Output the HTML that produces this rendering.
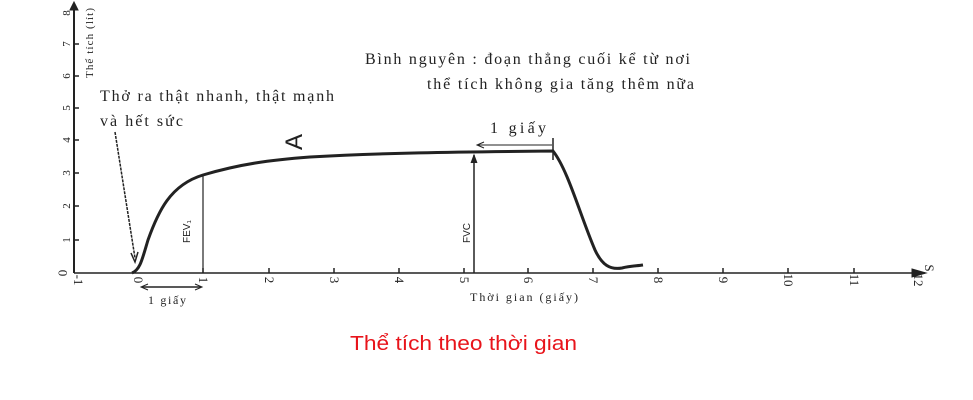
<!DOCTYPE html>
<html><head><meta charset="utf-8"><style>
html,body{margin:0;padding:0;background:#fff;width:973px;height:400px;overflow:hidden}
svg{position:absolute;left:0;top:0}
.s{font-family:"Liberation Serif",serif;fill:#222}
</style></head><body>
<svg width="973" height="400" viewBox="0 0 973 400">
<g stroke="#222" fill="none">
<line x1="74" y1="273" x2="74" y2="6" stroke-width="2"/>
<path d="M70,10 L74,2 L78,10Z" fill="#222"/>
<line x1="74" y1="273" x2="925" y2="273" stroke-width="1.5"/>
<path d="M912,269 L926,273 L912,277Z" fill="#222"/>
<g stroke-width="1.5">
<line x1="74" y1="240" x2="79" y2="240"/><line x1="74" y1="206" x2="79" y2="206"/>
<line x1="74" y1="173" x2="79" y2="173"/><line x1="74" y1="140" x2="79" y2="140"/>
<line x1="74" y1="108" x2="79" y2="108"/><line x1="74" y1="76" x2="79" y2="76"/>
<line x1="74" y1="44" x2="79" y2="44"/>
<line x1="203" y1="268" x2="203" y2="273"/><line x1="269" y1="268" x2="269" y2="273"/>
<line x1="334" y1="268" x2="334" y2="273"/><line x1="399" y1="268" x2="399" y2="273"/>
<line x1="464" y1="268" x2="464" y2="273"/><line x1="528" y1="268" x2="528" y2="273"/>
<line x1="593" y1="268" x2="593" y2="273"/><line x1="658" y1="268" x2="658" y2="273"/>
<line x1="723" y1="268" x2="723" y2="273"/><line x1="788" y1="268" x2="788" y2="273"/>
<line x1="854" y1="268" x2="854" y2="273"/>
</g>
<path d="M132,273 C140,270 142,260 148,240 C158,212 170,185 203,175 C240,164 270,160 310,157 C380,153 450,152 553,151 C568,170 580,215 595,250 C602,265 610,270 622,268 C630,266 636,266 643,265" stroke-width="3"/>
<line x1="115" y1="132" x2="135" y2="258" stroke-width="1.5" stroke-dasharray="3,1"/>
<path d="M131,253 L135,262 L138,252" stroke-width="1.5"/>
<line x1="203" y1="175" x2="203" y2="273" stroke-width="1.2"/>
<line x1="474" y1="155" x2="474" y2="273" stroke-width="1.5"/>
<path d="M471,163 L474,155 L477,163" fill="#222"/>
<line x1="142" y1="287" x2="201" y2="287" stroke-width="1.5"/>
<path d="M148,284 L141,287 L148,290 M195,284 L202,287 L195,290"/>
<line x1="478" y1="145" x2="552" y2="145" stroke-width="1"/>
<path d="M484,142 L477,145 L484,148"/>
<line x1="553" y1="138" x2="553" y2="160" stroke-width="1.5"/>
</g>
<g class="s" font-size="13">
<text transform="translate(93,78) rotate(-90)" font-size="11" textLength="70" lengthAdjust="spacing">Thể tích (lít)</text>
<text transform="translate(67,273) rotate(-90)" text-anchor="middle" font-size="13">0</text>
<text transform="translate(70,240) rotate(-90)" text-anchor="middle" font-size="11">1</text>
<text transform="translate(70,206) rotate(-90)" text-anchor="middle" font-size="11">2</text>
<text transform="translate(70,173) rotate(-90)" text-anchor="middle" font-size="11">3</text>
<text transform="translate(70,140) rotate(-90)" text-anchor="middle" font-size="11">4</text>
<text transform="translate(70,108) rotate(-90)" text-anchor="middle" font-size="11">5</text>
<text transform="translate(70,76) rotate(-90)" text-anchor="middle" font-size="11">6</text>
<text transform="translate(70,44) rotate(-90)" text-anchor="middle" font-size="11">7</text>
<text transform="translate(70,13) rotate(-90)" text-anchor="middle" font-size="11">8</text>
<g font-size="13" text-anchor="middle">
<text transform="translate(74,280) rotate(90)">-1</text>
<text transform="translate(134,280) rotate(90)">0</text>
<text transform="translate(199,280) rotate(90)">1</text>
<text transform="translate(265,280) rotate(90)">2</text>
<text transform="translate(330,280) rotate(90)">3</text>
<text transform="translate(395,280) rotate(90)">4</text>
<text transform="translate(460,280) rotate(90)">5</text>
<text transform="translate(524,280) rotate(90)">6</text>
<text transform="translate(589,280) rotate(90)">7</text>
<text transform="translate(654,280) rotate(90)">8</text>
<text transform="translate(719,280) rotate(90)">9</text>
<text transform="translate(784,280) rotate(90)">10</text>
<text transform="translate(850,280) rotate(90)">11</text>
<text transform="translate(914,280) rotate(90)">12</text>
<text transform="translate(925,268) rotate(90)">S</text>
</g>
<text x="100" y="101" font-size="16" textLength="234" lengthAdjust="spacing">Thở ra thật nhanh, thật mạnh</text>
<text x="100" y="126" font-size="16" textLength="83" lengthAdjust="spacing">và hết sức</text>
<text x="365" y="64" font-size="16" textLength="325" lengthAdjust="spacing">Bình nguyên : đoạn thẳng cuối kể từ nơi</text>
<text x="427" y="89" font-size="16" textLength="267" lengthAdjust="spacing">thể tích không gia tăng thêm nữa</text>
<text x="490" y="133" font-size="16" textLength="56" lengthAdjust="spacing">1 giấy</text>
<text x="148" y="304" font-size="12" textLength="38" lengthAdjust="spacing">1 giấy</text>
<text x="470" y="301" font-size="12" textLength="108" lengthAdjust="spacing">Thời gian (giấy)</text>
<text transform="translate(302,150) rotate(-90)" font-size="24" font-family="Liberation Sans,sans-serif">A</text>
<text transform="translate(190,243) rotate(-90)" font-size="10" font-family="Liberation Sans,sans-serif">FEV₁</text>
<text transform="translate(470,243) rotate(-90)" font-size="10" font-family="Liberation Sans,sans-serif">FVC</text>
</g>
<text x="350" y="350" font-family="Liberation Sans,sans-serif" font-size="20" fill="#e8141b" textLength="227" lengthAdjust="spacingAndGlyphs">Thể tích theo thời gian</text>
</svg>
</body></html>
